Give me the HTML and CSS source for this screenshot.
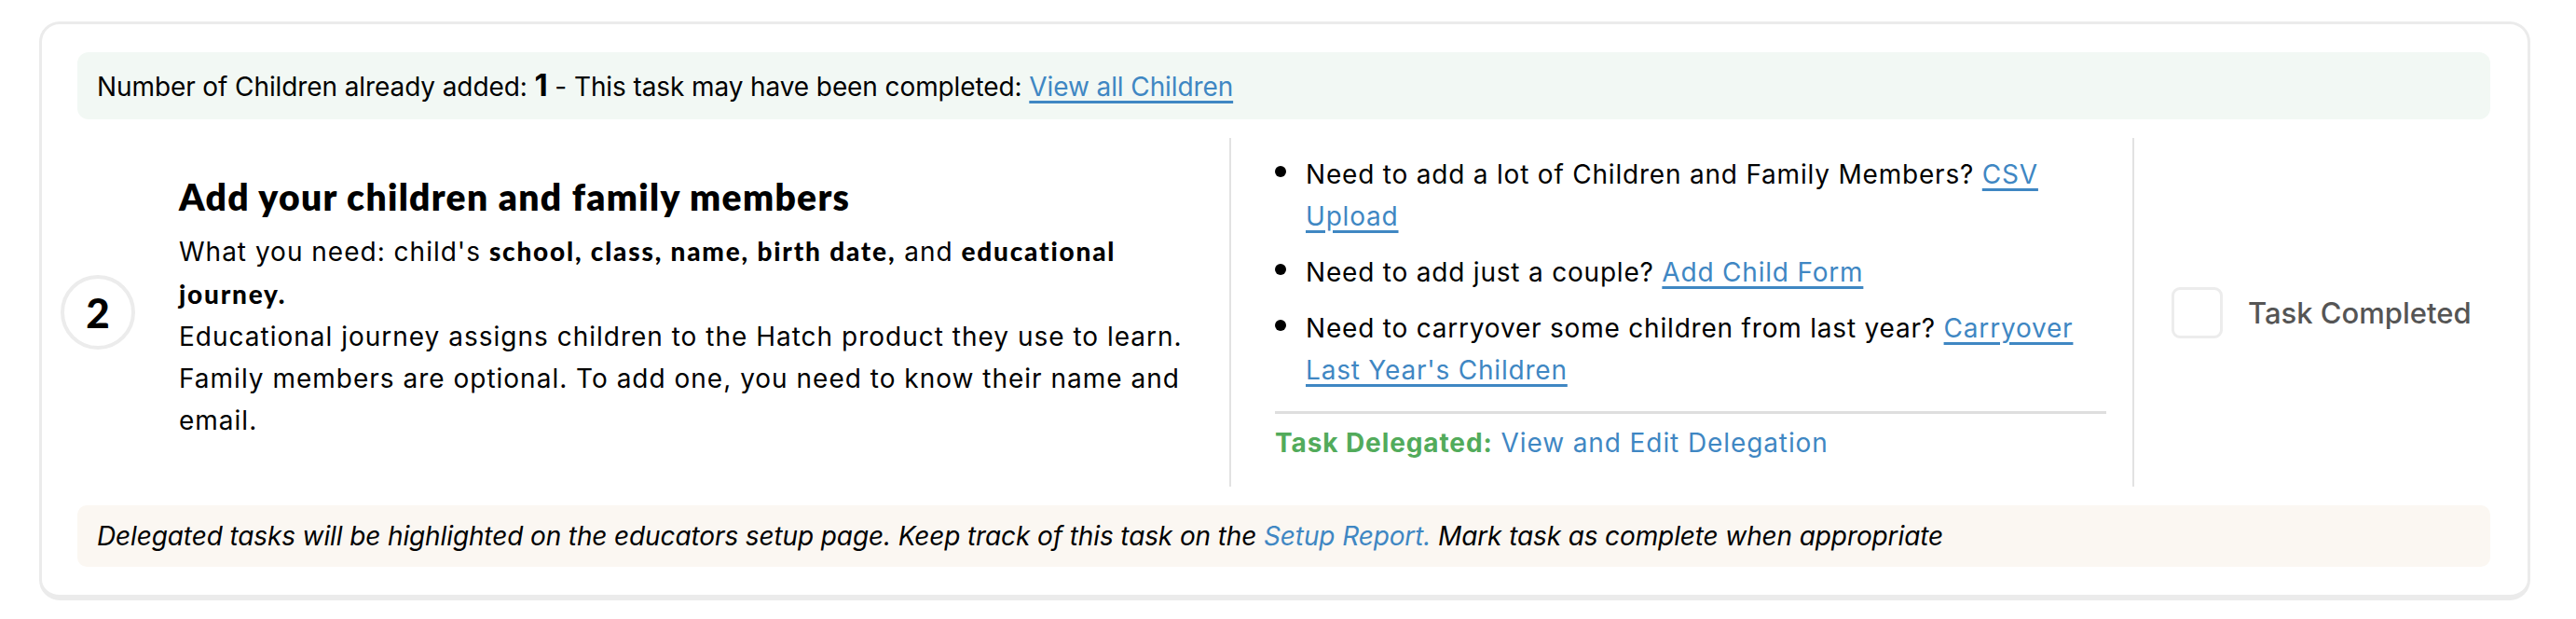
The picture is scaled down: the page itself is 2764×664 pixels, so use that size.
FILE: index.html
```html
<!DOCTYPE html>
<html lang="en">
<head>
<meta charset="utf-8">
<title>Add your children and family members</title>
<link rel="stylesheet" href="styles.css">
</head>
<body>
<div class="card">
  <div class="info-banner">
    <span>Number of Children already added: <b class="count">1</b> - This task may have been completed: <a href="#" class="link">View all Children</a></span>
  </div>
  <div class="task-row">
    <div class="col-desc">
      <div class="step-circle">2</div>
      <div class="desc-text">
        <h2 class="task-title">Add your children and family members</h2>
        <p class="task-body">What you need: child's <strong>school, class, name, birth date,</strong> and <strong>educational journey.</strong><br>Educational journey assigns children to the Hatch product they use to learn. Family members are optional. To add one, you need to know their name and email.</p>
      </div>
    </div>
    <div class="col-actions">
      <ul class="action-list">
        <li>Need to add a lot of Children and Family Members? <a href="#" class="link">CSV Upload</a></li>
        <li>Need to add just a couple? <a href="#" class="link">Add Child Form</a></li>
        <li>Need to carryover some children from last year? <a href="#" class="link">Carryover Last Year's Children</a></li>
      </ul>
      <div class="delegated"><span class="delegated-label">Task Delegated:</span> <a href="#" class="plain-link">View and Edit Delegation</a></div>
    </div>
    <div class="col-complete">
      <label class="complete-label"><span class="checkbox"></span><span class="complete-text">Task Completed</span></label>
    </div>
  </div>
  <div class="note-banner">
    <em>Delegated tasks will be highlighted on the educators setup page. Keep track of this task on the <a href="#" class="plain-link">Setup Report.</a> Mark task as complete when appropriate</em>
  </div>
</div>
</body>
</html>
```
FILE: styles.css
```css
* { box-sizing: border-box; }
html, body { margin: 0; padding: 0; background: #ffffff; }
body {
  font-family: Inter, "Liberation Sans", sans-serif;
  color: #000;
  padding: 23px 49px 0 42px;
}
.card {
  border: 3px solid #ebebeb;
  border-bottom-width: 6px;
  border-radius: 22px;
  padding: 30px 0;
  background: #fff;
}
.info-banner {
  margin: 0 40px 0 38px;
  height: 72px;
  background: #f2f8f4;
  border-radius: 12px;
  padding: 0 21px;
  display: flex;
  align-items: center;
  font-size: 28px;
  letter-spacing: -0.1px;
  line-height: 34px;
}
.count { font-size: 33px; font-weight: 700; }
.link {
  color: #3f87c3;
  text-decoration: underline;
  text-decoration-thickness: 3px;
  text-underline-offset: 5px;
}
.plain-link { color: #3f87c3; text-decoration: none; }
.task-row {
  margin: 20px 0;
  height: 374px;
  display: grid;
  grid-template-columns: 1274px 971px 1fr;
}
.col-desc {
  display: flex;
  align-items: flex-start;
  padding-left: 20px;
  padding-right: 40px;
}
.step-circle {
  flex: 0 0 auto;
  align-self: center;
  width: 80px;
  height: 80px;
  border: 4px solid #ececec;
  border-radius: 50%;
  display: flex;
  align-items: center;
  justify-content: center;
  font-family: Lato, Inter, sans-serif;
  font-weight: 900;
  font-size: 44px;
  margin-right: 47px;
}
.desc-text { padding-top: 41px; }
.task-title {
  margin: 0 0 14px;
  font-family: Lato, Inter, sans-serif;
  font-weight: 800;
  font-size: 39px;
  letter-spacing: 1.3px;
  line-height: 44px;
}
.task-body {
  margin: 0;
  font-size: 28px;
  letter-spacing: 1px;
  line-height: 45px;
}
.task-body strong {
  font-family: Lato, Inter, sans-serif;
  font-weight: 900;
  font-size: 28px;
  letter-spacing: 1.8px;
}
.col-actions {
  border-left: 2px solid #e2e2e2;
  border-right: 2px solid #e2e2e2;
  padding: 17px 28px 0 47px;
}
.action-list {
  list-style: none;
  margin: 0;
  padding: 0 0 21px;
  border-bottom: 3px solid #dedede;
}
.action-list li {
  position: relative;
  padding-left: 33px;
  font-size: 28px;
  letter-spacing: 0.8px;
  line-height: 45px;
  margin-bottom: 15px;
}
.action-list li:last-child { margin-bottom: 0; }
.action-list li::before {
  content: "";
  position: absolute;
  left: 0;
  top: 13px;
  width: 12px;
  height: 12px;
  border-radius: 50%;
  background: #000;
}
.delegated {
  margin-top: 11px;
  font-size: 28px;
  letter-spacing: 0.9px;
  line-height: 40px;
}
.delegated-label { color: #52ab5b; font-weight: 700; }
.col-complete {
  display: flex;
  align-items: center;
  padding-left: 40px;
}
.complete-label { display: flex; align-items: center; cursor: pointer; }
.checkbox {
  width: 55px;
  height: 55px;
  border: 3px solid #ececec;
  border-radius: 9px;
  margin-right: 27px;
}
.complete-text { font-size: 31px; color: #555; font-weight: 500; }
.note-banner {
  margin: 0 40px 0 38px;
  height: 66px;
  background: #fbf7f2;
  border-radius: 10px;
  padding: 0 21px;
  display: flex;
  align-items: center;
  font-size: 28px;
  letter-spacing: -0.12px;
  line-height: 34px;
}
```
